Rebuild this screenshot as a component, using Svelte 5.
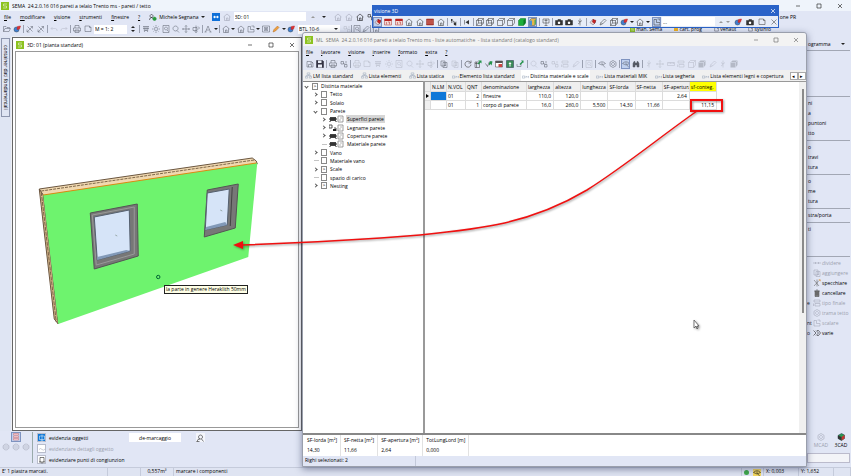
<script>
  // each shape: [path, fill, stroke], drawn on a 16x16 grid
  const c = "currentColor";
  const n = "none";
  const icons = {
    logo: [["M0 0h16v16H0z", "#8cc21f", n], ["M12 4H5v4h6v4H4", n, "#fff"]],
    folder: [["M1 13V3h5l2 2h5v2M1 13l3-6h11l-3 6z", n, c]],
    ball: [["M2 9a5 5 0 1 0 10 0a5 5 0 1 0-10 0", "#3f7fd0", "#345"], ["M8 9l1-6l6-1l-2 6z", "#e03030", "#b22"]],
    brush: [["M2 14L13 3M3 3l10 10M9 3h4v4M2 9v5h5", n, c]],
    undo: [["M5 4L2 7l3 3M2 7h9q3 0 3 4v1", n, c]],
    redo: [["M11 4l3 3l-3 3M14 7H5q-3 0-3 4v1", n, c]],
    printer: [["M4 6V1h8v5M1 6h14v6H1zM4 10h8v5H4z", n, c]],
    page: [["M2 2h9l3 3v8H2zM11 2v3h3", n, c]],
    plane: [["M2 3h12M4 3l1 11M12 3l-1 11M8 3v9M2 7h12M5 11h6", n, c]],
    light: [["M8 5a3 3 0 1 0 .1 0M8 0v3M8 13v3M0 8h3M13 8h3M3 3l2 2M11 11l2 2M13 3l-2 2M5 11l-2 2", n, c]],
    find: [["M2 1h12v14H2zM8 4a3 3 0 1 0 .1 0M10 10l3 3", n, c]],
    lens: [["M7 2a5 5 0 1 0 .1 0M10 11l4 4", n, c]],
    move: [["M8 1v14M1 8h14M6 3l2-2l2 2M6 13l2 2l2-2M3 6L1 8l2 2M13 6l2 2l-2 2", n, c]],
    orbit: [["M2 5h8v6H2zM8 1v14M12 3l3 3l-3 3M5 13l3 2l3-2", n, c]],
    compass: [["M8 2L3 14M8 2l5 12M5 10h6M1 14h4M11 14h4", n, c]],
    house: [["M1 8l7-6l7 6M3 7v8h10V7M7 15v-5h3v5", n, c]],
    plan: [["M2 3h5v6h7v5H2zM9 2h5v4", n, c]],
    target: [["M1 2h14v12H1zM4 4l8 8M12 4l-8 8M8 5a3 3 0 1 0 .1 0", n, c]],
    pencil: [["M2 14l2-5l7-7l3 3l-7 7z", "#f0a040", "#b06a20"]],
    pen: [["M2 14l2-5l7-7l3 3l-7 7zM4 9l3 3", n, c]],
    person: [["M5 3a3 3 0 1 0 .1 0M1 14q0-5 4-5q3 0 4 3", n, c], ["M11 8a3.5 3.5 0 1 0 .1 0", "#2b9a3e", "#2b9a3e"]],
    remote: [["M0 0h16v16H0z", "#0e6fd8", n], ["M2 8l4-3v2h4V5l4 3l-4 3V9H6v2z", "#fff", n]],
    open: [["M2 3h9l3 3v8H2zM5 14V9h6v5", n, c], ["M8 6h5l-2-2", n, c]],
    save: [["M1 1h12l2 2v12H1z", "#334", "#223"], ["M4 1h7v5H4zM4 9h8v6H4z", "#e9edf6", n]],
    refresh: [["M13 5a6 6 0 1 0 1 4M14 1v5H9", n, "#222"]],
    sheet: [["M2 4h9v11H2zM2 7h9M5 4v11", n, "#333"], ["M8 1h7v6l-2-2l-4 4l-2-2l4-4z", "#24934a", n]],
    check: [["M1 7l4 6L9 3", n, "#333"], ["M8 6l3-4l4 1l-2 8l-2-3l-3 3z", "#24934a", n]],
    table: [["M1 2h14v12H1z", "#fff", "#333"], ["M1 2h14v4H1z", "#555", n], ["M7 8h7v6H7z", "#c44", n]],
    cells: [["M1 1h14v14H1z", "#3a8a58", "#234"], ["M8 4l3 4H9v5H7V8H5z", "#fff", n]],
    arrow: [["M2 13h8V8M2 13V8", n, c], ["M7 8l5-5l-2-2h5v5l-1-1l-5 5z", "#24934a", n]],
    bolt: [["M3 2v7l5-3v7M8 13l4 2v-8", n, c], ["M2 2h3v4H2zM8 9h4v5H8z", c, n]],
    skip: [["M3 4v9", n, c], ["M12 4v9L5 8.5z", c, n]],
    camera: [["M1 5h4l1-2h5l1 2h3v9H1z", c, c], ["M8 7a2.5 2.5 0 1 0 .1 0", "#fff", n]],
    binoculars: [["M2 14V7l2-4h2v3h4V3h2l2 4v7h-4v-4H6v4z", c, c]],
    eye: [["M1 7q7-7 14 0q-7 6-14 0M8 5v4M9 9l5 6", n, c]],
    cube: [["M1 5l4-4h10v9l-4 5H1zM1 5h10v10M11 5l4-4", n, c]],
    wire: [["M1 5l4-4h10v9l-4 5H1zM1 5h10v10M11 5l4-4M5 1v9h10M5 10l-4 5", n, c]],
    green: [["M1 5l4-4h10v9l-4 5H1z", "#1dae3a", "#147a2a"], ["M11 5l4-4v9l-4 5z", "#0d7825", n]],
    color: [["M1 5l4-4h10v9l-4 5H1z", "#e7b54a", "#555"], ["M1 5h5v10H1z", "#4a8fd4", n], ["M11 5l4-4v9l-4 5z", "#4aa560", n]],
    solid: [["M1 5l4-4h10v9l-4 5H1z", c, n], ["M1 5h10v10M11 5l4-4", n, "#e1e7f5"]],
    brick: [["M1 2h14v12H1z", "#b23a32", "#8a2a24"], ["M1 6h14M1 10h14", n, "#e0a090"]],
    storey: [["M1 2h14v12H1z", "#f4d8d4", "#a33"], ["M1 2h14v4H1z", "#b22", n], ["M5 8v5M8 8h3v5", n, "#a33"]],
    marker: [["M2 9l6-7l6 6l-6 6z", "#e9d4d4", "#667"], ["M8 3l6 2l-3 6l-4-3z", "#c22", "#811"]],
    cone: [["M2 2h12v8H2zM8 2v13M5 15h6M5 5h6", n, c]],
    gear: [["M8 5a3 3 0 1 0 .1 0M8 1l6 3.5v7L8 15l-6-3.5v-7z", n, c]],
    paste: [["M2 2h8v10H2zM6 5h8v10H6zM8 8h4M8 11h4", n, c]],
    rows: [["M2 2h12v4H2zM4 9h10v5H4zM1 9v5", n, c]],
    chain: [["M2 3h5v5H2zM9 9h5v5H9zM7 6l3 3M12 2v5", n, c]],
    pipe: [["M8 1v14M4 5l4 3l4-3M4 12l4-3", n, c]],
    ruler: [["M1 11V5h14v6zM4 5v3M7 5v3M10 5v3M13 5v3", n, c]],
    list: [["M5 2h6v4H5zM1 10h5v4H1zM10 10h5v4h-5zM8 6v2M3 10V8h10v2", n, c]],
    tiny: [["M1 9h5v5H1zM9 14V9l3 3l3-3v5", n, c]],
    trash: [["M4 4h8v11H4zM2 4h12M6 2h4M6 6v7M8 6v7M10 6v7", "#888", "#444"]],
    mirror: [["M2 2l10 12M2 14L12 3M8 1v14", n, "#555"], ["M11 1h4v4z", "#e08a20", n]],
    line: [["M0 8h16M5 6v4M11 6v4", n, c]],
    more: [["M1 3l5 5l-5 5M6 3l5 5l-5 5M8 3h3l4 5l-4 5H8", n, c]],
    cad: [["M2 5l7-4l6 3v7l-6 4l-7-4z", "#2a9a52", "#234"], ["M9 8l6-4v7l-6 4z", "#c33", n], ["M2 5l7 3v7l-7-4z", "#333", n]],
    layers: [["M3 1h10v3H3zM3 6h10v3H3zM3 11h10v3H3z", "#f7d9df", "#c66"]],
    disc: [["M8 2a6 6 0 1 0 .1 0M3 6h10M3 10h10", n, c]],
    cursorBox: [["M3 4h10v7H3zM8 1v13M5 14h6", n, c]],
    wave: [["M2 9q3-4 6 0q3 3 6-1", n, c]],
    snap: [["M4 3h8v9H4zM2 12h3M11 12h3M8 12v3", n, c]],
    user: [["M9 2a4 4 0 1 0 .1 0M2 15q1-6 6-5M11 10l4 5M1 15h6", n, c]]
  };

  const menu = ["file", "modificare", "visione", "strumenti", "finestre", "?"];
  const tools = [
    "folder", "ball", "|", "brush", "brush", "|", "undo-", "redo-", "|", "printer", "page"
  ];
  const viewTools = [
    "|", "plane", "light", "find", "lens", "move", "orbit", "|", "compass", "v", "|",
    "house", "v", "house", "plan", "v", "target", "pencil", "v", "ball"
  ];
  const visioneTools = [
    "marker*", "storey", "storey", "house", "house", "brick", "house", "|", "bolt", "|", "skip", "|",
    "wire", "wire", "cube", "cube", "green", "color*", "|", "cone", "|", "camera", "camera", "pipe", "|",
    "marker", "pen", "wire", "ball", "v", "house", "v", "plan*"
  ];
  const mlMenu = ["file", "lavorare", "visione", "inserire", "formato", "extra", "?"];
  const mlTools = [
    "open", "save", "|", "printer", "chain", "|", "printer-", "page-", "plane-", "light-", "find-", "lens-",
    "move-", "orbit-", "|", "paste", "paste-", "|", "refresh", "sheet", "check", "table", "cells", "arrow", "|",
    "lens-", "chain", "chain-", "rows-", "pen-", "|", "find-", "|", "eye", "gear", "|", "eye*", "binoculars", "|",
    "pipe-", "move-", "ruler-", "rows-", "cube-", "solid-", "pen-", "pipe-", "solid-"
  ];

  const tabs = [
    { name: "LM lista standard", icon: "list" },
    { name: "Lista elementi", icon: "list" },
    { name: "Lista statica", icon: "list" },
    { name: "Elemento lista standard", icon: "tiny" },
    { name: "Distinta materiale e scale", icon: "tiny", active: true },
    { name: "Lista materiali MIK", icon: "tiny" },
    { name: "Lista segheria", icon: "tiny" },
    { name: "Lista elementi legni e copertura", icon: "tiny" }
  ];

  const tree = [
    { name: "Distinta materiale", level: 0, sign: "open", mark: ">" },
    { name: "Tetto", level: 1, sign: "closed" },
    { name: "Solaio", level: 1, sign: "closed" },
    { name: "Parete", level: 1, sign: "open" },
    { name: "Superfici parete", level: 2, sign: "closed", kind: "bed" },
    { name: "Legname parete", level: 2, sign: "closed", kind: "wood" },
    { name: "Coperture parete", level: 2, sign: "closed", kind: "bed" },
    { name: "Materiale parete", level: 2, sign: "end", kind: "bed" },
    { name: "Vano", level: 1, sign: "closed" },
    { name: "Materiale vano", level: 1, sign: "end" },
    { name: "Scale", level: 1, sign: "closed", mark: ">" },
    { name: "spazio di carico", level: 1, sign: "end" },
    { name: "Nesting", level: 1, sign: "closed", mark: ">" }
  ];
  let selected = $state("Superfici parete");

  const columns = [
    "N.LM", "N.VOL", "QNT", "denominazione", "larghezza", "altezza",
    "lunghezza", "SF-lorda", "SF-netta", "SF-apertura", "sf-conteg."
  ];
  const rows = [
    ["", "01", "2", "finestre", "110,0", "120,0", "", "", "", "2,64", ""],
    ["", "01", "1", "corpo di parete", "16,0", "260,0", "5,500", "14,30", "11,66", "", "11,15"]
  ];
  const totals = [
    ["SF-lorda [m²]", "14,30"],
    ["SF-netta [m²]", "11,66"],
    ["SF-apertura [m²]", "2,64"],
    ["TotLungLord [m]", "0,000"]
  ];

  const groups = [
    ["ni", "a", "puntoni", "tto"],
    ["o", "travi", "tura"],
    ["o", "me", "tura"],
    ["stra/porta"],
    ["ti"]
  ];
  const actions = [
    { name: "dividere", icon: "line", off: true },
    { name: "aggiungere", icon: "paste", off: true },
    { name: "specchiare", icon: "mirror" },
    { name: "cancellare", icon: "trash" },
    { name: "tipo finale", icon: "rows", off: true, rest: "e" },
    { name: "trama tetto", icon: "gear", off: true },
    { name: "scalare", icon: "plan", off: true, rest: "nt" },
    { name: "varie", icon: "more", rest: "o" }
  ];
</script>

{#snippet icon(name)}
  <svg class="icon" viewBox="0 0 16 16" aria-hidden="true">
    {#each icons[name] as [d, fill, stroke]}
      <path {d} {fill} {stroke} />
    {/each}
  </svg>
{/snippet}

{#snippet toolbar(list)}
  {#each list as item}
    {#if item === "|"}
      <i class="sep"></i>
    {:else if item === "v"}
      <i class="drop"></i>
    {:else}
      <button class="tool" class:off={item.endsWith("-")} class:on={item.endsWith("*")} aria-label={item}>
        {@render icon(item.replace(/[-*]/, ""))}
      </button>
    {/if}
  {/each}
{/snippet}

{#snippet controls()}
  <div class="controls">
    <button aria-label="minimize"><svg viewBox="0 0 8 8"><path d="M2 4h4" /></svg></button>
    <button aria-label="maximize"><svg viewBox="0 0 8 8"><path d="M2 2h4v4H2z" /></svg></button>
    <button aria-label="close"><svg viewBox="0 0 8 8"><path d="M2 2l4 4M6 2L2 6" /></svg></button>
  </div>
{/snippet}

<div class="app">
  <header class="title">
    {@render icon("logo")}
    <span>SEMA&nbsp; 24.2.0.16 016 pareti a telaio Trento ms - pareti / tetto</span>
    {@render controls()}
  </header>

  <nav class="menu">
    {#each menu as item}
      <button><u>{item[0]}</u>{item.slice(1)}</button>
    {/each}
    <button class="account">{@render icon("person")} Michele Segnana <i class="drop"></i></button>
    <span class="blue">{@render icon("remote")}</span>
    <span class="pale">{@render icon("house")}</span>
    <input class="view" aria-label="3D" value="3D: 01" />
    <div class="levels">
      <i class="rise pale"></i><i class="drop"></i>
      <span class="pale">{@render icon("house")}</span>
      <span class="pale">{@render icon("house")}</span>
      {@render icon("house")}
      {@render icon("chain")}
    </div>
    <span class="profile">one PR</span>
  </nav>

  <div class="bar">
    <div class="tools file">{@render toolbar(tools)}</div>
    <input class="scale" aria-label="M" value="M = 1: 2" />
    <span class="spin"><i class="rise"></i><i class="drop"></i></span>
    <div class="tools views">{@render toolbar(viewTools)}</div>
    <span class="pick">
      <select class="btl" aria-label="BTL"><option>BTL 10-6</option></select>
      <i class="drop"></i>
    </span>
    <div class="tools">{@render toolbar(["chain-", "|", "find", "pen", "|", "house"])}</div>
    <div class="links">
      <a href="#sema">{@render icon("logo")} man. Sema</a>
      <a href="#prog"><i class="dot"></i> cart. prog</a>
      <a href="#venaut">{@render icon("page")} venaut</a>
      <a href="#systinfo">{@render icon("page")} sysInfo</a>
    </div>
  </div>

  <main class="work">
    <aside class="dock"><button>container dati fondamentali</button></aside>
    <section class="mdi">
      <header>
        {@render icon("logo")}
        <span>3D: 01 (pianta standard)</span>
        {@render controls()}
      </header>
      <div class="scene">
        <svg viewBox="16 52 281 375">
          <path d="M39 189L252 158L256 161L257 164L43 196z" fill="#f0d8b0" stroke="#6b5640" />
          <path d="M41 191L254 160" stroke="#80684a" stroke-dasharray="3 1" />
          <path d="M39 189L43 195L58 324L54 319z" fill="#d9b98c" stroke="#6b5640" />
          <path d="M41 192L56 322" stroke="#7a6248" stroke-dasharray="4 1" />
          <path d="M43 195L257 163L248 257L58 324z" fill="#6ef36e" />
          <path d="M43 195L256 163" stroke="#d98a10" />
          <path d="M90 213L137 204L138 256L94 269z" fill="#777" stroke="#555" />
          <path d="M92 215L134 207L134 254L96 265z" fill="none" stroke="#999" />
          <path d="M94 217L129 210L130 251L97 260z" fill="#d6e4f8" stroke="#556070" />
          <path d="M97 260L130 251L126 250L97 257z" fill="#8299b8" />
          <path d="M115 235l2 1" stroke="#9aa" />
          <path d="M207 190L238 184L235 228L204 237z" fill="#777" stroke="#555" />
          <path d="M232 187L230 226" stroke="#444" />
          <path d="M207 193L229 189L227 225L205 230z" fill="#d6e4f8" stroke="#556070" />
          <path d="M205 230L227 225L225 222L206 227z" fill="#8299b8" />
          <path d="M220 210l2 1" stroke="#9aa" />
          <circle cx="158" cy="277" r="1.7" fill="none" stroke="#063" />
        </svg>
        <div class="tip">la parte in genere Heraklith 50mm</div>
      </div>
    </section>
  </main>

  <aside class="side">
    <label class="program">ogramma <i class="drop"></i></label>
    <div class="blank"></div>
    {#each groups as group}
      <div class="group">
        {#each group as item}<button>{item}</button>{/each}
      </div>
    {/each}
    <div class="actions">
      {#each actions as a}
        <button class:off={a.off}>
          <b>{a.rest ?? ""}</b>
          {@render icon(a.icon)}
          <span>{a.name}</span>
        </button>
      {/each}
    </div>
    <div class="cad">
      <button class="off">{@render icon("gear")} MCAD</button>
      <button>{@render icon("cad")} 3CAD</button>
    </div>
    <select aria-label="CAD"><option></option></select>
  </aside>

  <section class="panel">
    <div class="modes">
      <button class="on" aria-label="layers">{@render icon("layers")}</button>
      <div class="discs off">{@render icon("disc")}{@render icon("disc")}{@render icon("disc")}</div>
    </div>
    <div class="marks">
      <button><i class="box active">{@render icon("cursorBox")}</i> evidenzia oggetti</button>
      <button class="off"><i class="box">{@render icon("wave")}</i> evidenziare dettagli oggetto</button>
      <button><i class="box">{@render icon("snap")}</i> evidenziare punti di congiunzion</button>
    </div>
    <button class="demark">de-marcaggio</button>
    <button class="who" aria-label="user">{@render icon("user")}</button>
  </section>

  <footer class="status">
    <span class="message">E' 1 piastra marcati.</span>
    <span class="empty"></span>
    <span class="volume">0,557m³</span>
    <span class="hint">marcare i componenti</span>
    <span class="lamps"><i class="lamp"></i><i class="look">{@render icon("eye")}</i></span>
    <span class="coord">X: 0,003</span>
    <span class="coord">Y: 1,652</span>
    <span class="last"></span>
  </footer>

  <section class="visione">
    <header>visione 3D <button aria-label="close"><svg viewBox="0 0 8 8"><path d="M2 2l4 4M6 2L2 6" /></svg></button></header>
    <div class="row">
      <div class="tools grow">{@render toolbar(visioneTools)}</div>
      <input aria-label="visione" value="..." />
      <div class="tools tail">
        <i class="rise pale"></i><i class="drop pale"></i>
        {@render toolbar(["ball", "camera", "page"])}
        <button class="tool" aria-label="close"><svg class="icon" viewBox="0 0 16 16"><path d="M3 3l10 10M13 3L3 13" stroke="#333" /></svg></button>
      </div>
    </div>
  </section>

  <section class="ml">
    <header>
      {@render icon("logo")}
      <span>ML&nbsp; SEMA&nbsp; 24.2.0.16 016 pareti a telaio Trento ms - liste automatiche&nbsp; - lista standard (catalogo standard)</span>
      {@render controls()}
    </header>
    <nav>
      {#each mlMenu as item}
        <button><u>{item[0]}</u>{item.slice(1)}</button>
      {/each}
    </nav>
    <div class="tools wide">{@render toolbar(mlTools)}</div>
    <div class="tabs">
      {#each tabs as t}
        <button class:active={t.active}>{@render icon(t.icon)} {t.name}</button>
      {/each}
      <span class="arrows"><button>◂</button><button>▸</button></span>
    </div>
    <div class="split">
      <ul class="tree">
        {#each tree as node}
          <li class={"level" + node.level}>
            <i class="sign {node.sign}"></i>
            {#if node.kind}
              <svg class="kind" viewBox="0 0 15 8" aria-hidden="true">
                {#if node.kind === "bed"}
                  <path d="M1 2h6v4H1z" fill="#444" /><path d="M0 4h8M1 6v1M7 6v1" stroke="#222" />
                {:else}
                  <path d="M0 1h3v3H0zM5 4h2v3" fill="none" stroke="#555" /><path d="M4 5h3v2H4z" fill="#222" />
                {/if}
                <path d="M9 1h5v6H9z" fill="#fff" stroke="#777" stroke-width="0.7" />
                <path d="M11 3h2M10 5h2" stroke="#999" stroke-width="0.7" />
              </svg>
            {:else}
              <i class="leaf">{node.mark ?? ""}</i>
            {/if}
            <button class:selected={selected === node.name} onclick={() => (selected = node.name)}>{node.name}</button>
          </li>
        {/each}
      </ul>
      <div class="grid">
        <table>
          <thead>
            <tr>
              <th class="point"></th>
              {#each columns as col, i}<th class="col{i}">{col}</th>{/each}
            </tr>
          </thead>
          <tbody>
            {#each rows as row, r}
              <tr>
                <td class="point">{#if r === 0}<i></i>{/if}</td>
                {#each row as cell, i}
                  <td class:num={i === 2 || i > 3} class:current={r === 0 && i === 0}>{cell}</td>
                {/each}
              </tr>
            {/each}
          </tbody>
        </table>
        <div class="scroll"><i></i></div>
      </div>
    </div>
    <dl class="totals">
      {#each totals as [name, value]}
        <div><dt>{name}</dt><dd>{value}</dd></div>
      {/each}
    </dl>
    <footer><span>Righi selezionati: 2</span></footer>
  </section>

  <!-- callout from the wall area value to the drawn wall -->
  <svg class="callout" viewBox="0 0 851 476" aria-hidden="true">
    <path class="curve" d="M697 111C660 137 625 166 587 190C530 224 480 229 420 235C360 240 300 243 242 245" />
    <path d="M233 245L243 241L243 249z" fill="#f01010" />
    <rect x="691" y="100" width="31" height="11" />
    <path class="pointer" d="M694 320v8l2-2l1 3l1-1l-1-2h2z" />
  </svg>
</div>

<style>
  :global(body) {
    font: 500 5px/8px "Open Sans", "Noto Sans", sans-serif;
    color: #000;
  }

  .app {
    position: relative;
    display: grid;
    grid-template-columns: 1fr 44px;
    grid-template-rows: 11px 11px 14px 1fr 36px 9px;
    min-height: 100vh;
    overflow: hidden;
    background: #e1e6f5;
    white-space: nowrap;
  }

  button, input, select {
    font: inherit;
    color: inherit;
    border: 0;
    padding: 0;
    margin: 0;
    background: none;
    border-radius: 0;
    text-align: left;
  }

  input, select {
    box-sizing: border-box;
    background: #fff;
    height: 9px;
    padding: 0 1px;
  }

  select { appearance: none; }

  .icon {
    width: 8px;
    height: 8px;
    flex: none;
    stroke-width: 1;
    vertical-align: middle;
  }

  .title, .menu, .bar, .status { grid-column: 1 / -1; }

  .title, .menu, .bar, .mdi header, .ml header, .visione header, .tools {
    display: flex;
    align-items: center;
  }

  .title {
    gap: 3px;
    padding-left: 1px;
    background: #eff4fb;
  }

  .controls {
    display: flex;
    gap: 13px;
    margin-left: auto;
    padding-right: 7px;
  }

  .controls button, .visione header button { width: 8px; height: 8px; }
  .controls svg, .visione header svg { display: block; fill: none; stroke: #333; stroke-width: 0.7; }

  .menu { gap: 9px; padding-left: 4px; }
  .account { display: flex; align-items: center; gap: 2px; }
  .pale, .off { color: #9a9fae; }
  .menu > .blue, .menu > .pale { margin-right: -6px; line-height: 6px; }
  .menu > .blue { margin-left: -2px; }
  .view { width: 72px; }
  .levels { display: flex; align-items: center; gap: 3px; margin-left: -4px; }
  .levels .drop { margin: 0 5px 0 4px; }
  .profile { margin-left: auto; padding-right: 55px; }

  .drop, .rise {
    flex: none;
    width: 0;
    height: 0;
    border: 2px solid transparent;
    border-top-color: #222;
    border-bottom-width: 0;
  }

  .rise { border-width: 0 2px 2px; border-bottom-color: #222; }
  .drop.pale { border-top-color: #999; }
  .rise.pale { border-bottom-color: #999; }

  .bar { gap: 2px; padding-left: 2px; }
  .tools { justify-content: space-between; color: #555b66; }
  .tools .off { color: #b4b9c6; }
  .tool { display: grid; place-items: center; width: 9px; height: 10px; }
  .tool.on, .panel .on { background: #bfd0ee; outline: 1px solid #7e93c0; outline-offset: -1px; }
  .sep { width: 1px; height: 8px; background: #9aa0b0; }
  .file { width: 90px; }
  .scale { width: 33px; }
  .spin { display: grid; gap: 2px; margin: 0 2px; }
  .views { width: 157px; }
  .pick { display: flex; align-items: center; width: 42px; background: #fff; }
  .btl { width: 36px; }
  .links { display: flex; gap: 12px; margin-left: auto; padding-right: 80px; }
  .links a { color: inherit; text-decoration: none; }
  .links .icon { width: 5px; height: 5px; }
  .dot { display: inline-block; width: 4px; height: 4px; background: #f0b020; }

  .work {
    display: grid;
    grid-template-columns: 11px 36% 1fr;
    background: #eef0f5;
  }

  .side, .work { min-height: 0; }
  .work .mdi { margin: 1px 0 0 1px; }

  .dock { background: #dfe5f3; padding-top: 2px; }

  .dock button {
    writing-mode: vertical-rl;
    width: 9px;
    margin-left: 1px;
    padding: 6px 0;
    border: 1px solid #8d96ae;
    line-height: 7px;
    font-size: 5px;
    box-sizing: border-box;
  }

  .mdi {
    display: flex;
    flex-direction: column;
    border: 1px solid #666;
    background: #fff;
    padding: 0 2px 2px;
  }

  .mdi header { height: 13px; gap: 3px; padding-left: 1px; }
  .mdi header .controls { padding-right: 3px; }

  .scene {
    position: relative;
    flex: 1;
    border: 1px solid #999;
  }

  .scene svg { position: absolute; inset: 0; width: 100%; height: 100%; fill: none; stroke-width: 1; }

  .tip {
    position: absolute;
    left: 148px;
    top: 233px;
    padding: 0 1px;
    border: 1px solid #222;
    background: #ffffe6;
    line-height: 7px;
  }

  .side {
    grid-column: 2;
    grid-row: 4 / 6;
    display: flex;
    flex-direction: column;
    padding-right: 1px;
    overflow: hidden;
  }

  .program { display: flex; align-items: center; justify-content: space-between; padding: 4px 5px 2px 1px; }
  .blank { height: 45px; border: solid #a2a7b4; border-width: 1px 0; }
  .group { padding: 1px 0 2px 1px; border-bottom: 1px solid #a2a7b4; }
  .group:nth-of-type(6) { height: 30px; }
  .group button { display: block; height: 10px; line-height: 10px; }
  .actions { padding-top: 1px; }
  .actions button { display: flex; align-items: center; gap: 1px; height: 10px; }
  .actions b { width: 5px; font-weight: 500; color: #111; }
  .cad { display: flex; gap: 2px; justify-content: flex-end; margin-top: auto; }
  .cad button { display: grid; justify-items: center; width: 18px; text-align: center; }
  .side > select { height: 10px; margin: 4px 0; border: 1px solid #bbc; background: #f3f4f8; }

  .panel {
    grid-row: 5;
    grid-column: 1;
    display: flex;
    align-items: flex-start;
    padding: 1px 0 0 2px;
  }

  .modes { width: 30px; height: 31px; border-right: 1px solid #9aa; margin-right: 4px; }
  .modes button { display: grid; place-items: center; width: 10px; height: 10px; margin-left: 9px; }
  .discs { display: flex; gap: 2px; padding-top: 1px; }
  .marks { width: 92px; }
  .marks button { display: flex; align-items: center; gap: 3px; height: 11px; }
  .box { display: grid; place-items: center; width: 9px; height: 9px; background: #fff; border: 1px solid #b8bccb; box-sizing: border-box; }
  .box.active { background: #0f78d8; color: #fff; }
  .demark { width: 52px; height: 9px; margin-top: 1px; text-align: center; background: #fff; }
  .who { margin: 1px 15px; width: 9px; height: 9px; background: #f4f6fb; }

  .status {
    display: flex;
    background: #dfe4f2;
    border-top: 1px solid #c5cbdb;
    box-sizing: border-box;
    line-height: 7px;
  }

  .status > span { padding: 0 2px; border-right: 1px solid #c5cbdb; box-sizing: border-box; }
  .message { width: 108px; }
  .empty, .volume { width: 33px; text-align: center; }
  .status .hint { flex: 1; }
  .lamps { display: flex; gap: 4px; align-items: center; }
  .lamp { width: 5px; height: 5px; border-radius: 50%; background: #3fa84a; }
  .look { display: grid; place-items: center; width: 8px; height: 7px; background: #f5d860; }
  .coord { width: 35px; }
  .last { width: 17px; }

  /* floating windows */
  .visione {
    position: absolute;
    left: 372px;
    right: 72px;
    top: 5px;
    border: 1px solid #2a63c8;
    background: #e7edf8;
  }

  .visione header { height: 10px; background: #2a63c8; color: #fff; padding: 0 1px; }
  .visione header button { margin-left: auto; }
  .visione header svg { stroke: #fff; }
  .row { display: flex; align-items: center; height: 11px; }
  .grow { flex: 1; margin-right: 1px; }
  .row .tool { color: #333; }
  .row input { width: 53px; }
  .tail { width: 63px; padding-left: 4px; box-sizing: border-box; }

  .ml {
    position: absolute;
    left: 302px;
    right: 44px;
    top: 32px;
    bottom: 9px;
    display: flex;
    flex-direction: column;
    border: 1px solid #9a9fac;
    border-radius: 3px 3px 0 0;
    box-sizing: border-box;
    background: #e1e6f5;
    box-shadow: 0 2px 7px rgba(30, 40, 80, 0.5);
  }

  .ml header { height: 13px; gap: 3px; padding-left: 2px; background: #f3f3f3; color: #777; border-radius: 3px 3px 0 0; }
  .ml header .controls { gap: 12px; padding-right: 6px; }
  .ml header .controls svg { stroke: #777; }
  .ml nav { display: flex; gap: 8px; padding: 2px 3px 1px; }
  .wide { width: 434px; height: 13px; padding-left: 2px; }

  .tabs {
    display: flex;
    align-items: center;
    justify-content: space-between;
    height: 11px;
    padding-left: 1px;
    background: #f0f0f0;
  }

  .tabs > button { display: flex; align-items: center; gap: 1px; height: 11px; padding: 0 1px; }
  .tabs .icon { color: #8a9ab0; width: 7px; height: 7px; }
  .tabs .active { background: #fff; }
  .arrows { display: flex; }
  .arrows button { width: 8px; height: 8px; border: 1px solid #aaa; background: #fff; box-sizing: border-box; line-height: 6px; text-align: center; }

  .split { display: grid; grid-template-columns: 120px 1fr; flex: 1; background: #fff; }

  .tree {
    margin: 0;
    padding: 0 0 0 2px;
    list-style: none;
    border-top: 1px solid #888;
    display: grid;
    grid-template-rows: repeat(13, 1fr);
    align-items: center;
    max-height: 108px;
  }

  .tree li { display: flex; align-items: center; gap: 2px; }
  .level1 { padding-left: 9px; }
  .level2 { padding-left: 17px; }
  .tree li button { line-height: 8px; padding: 0 1px; }
  .tree .selected { background: #d6d6d6; }
  .sign { width: 3px; height: 3px; margin-right: 2px; flex: none; box-sizing: border-box; }
  .open, .closed { border: solid #555; border-width: 0 1px 1px 0; transform: rotate(-45deg); }
  .open { transform: rotate(45deg); }
  .end { width: 5px; margin: 0; height: 1px; background: #c4c4c4; }
  .leaf { width: 6px; height: 7px; border: 1px solid #888; box-sizing: border-box; font-style: normal; line-height: 5px; text-align: center; }
  .kind { width: 15px; height: 8px; }

  .grid { display: flex; justify-content: space-between; border: solid #999; border-width: 1px 0 0 2px; }
  table { table-layout: fixed; width: 292px; border-collapse: separate; border-spacing: 0; align-self: flex-start; }
  th, td { height: 9px; padding: 0 2px 0 1px; box-sizing: border-box; border: solid #dcdcdc; border-width: 0 1px 1px 0; overflow: hidden; line-height: 8px; }
  th { height: 10px; background: #efefef; font-weight: 500; text-align: left; }
  .point { width: 6px; background: #efefef; padding: 0; }
  .point i { display: block; width: 0; height: 0; border: 2px solid transparent; border-left: 3px solid #000; border-right: 0; margin-left: 1px; }
  .col0, .col2 { width: 16px; }
  .col1 { width: 19px; }
  .col3 { width: 45px; }
  .col10 { background: #ffff00; }
  .num { text-align: right; }
  .current { background: #0f78d8; }
  .scroll { width: 7px; background: #f0f0f0; padding-top: 7px; }
  .scroll i { display: block; width: 2px; height: 65%; margin-left: 3px; background: #8a8a8a; }

  .totals {
    display: flex;
    margin: 0;
    padding-left: 1px;
    background: #fff;
    border-top: 2px solid #888;
    height: 21px;
  }

  .totals div { padding: 1px 3px; border-right: 1px solid #e2e2e2; min-width: 30px; box-sizing: border-box; }
  .totals dd { margin: 2px 0 0; }
  .ml footer { height: 10px; display: flex; }
  .ml footer span { width: 110px; padding-left: 2px; border-right: 1px solid #c3c9da; }

  .callout {
    position: absolute;
    inset: 0;
    width: 100%;
    height: 100%;
    fill: none;
    pointer-events: none;
    filter: drop-shadow(1px 1px 1px rgba(0, 0, 0, 0.4));
  }

  .curve { stroke: #f01010; stroke-width: 1.5; }
  .callout rect { stroke: #f01010; stroke-width: 2; }
  .pointer { fill: #fff; stroke: #444; stroke-width: 0.7; }
</style>
